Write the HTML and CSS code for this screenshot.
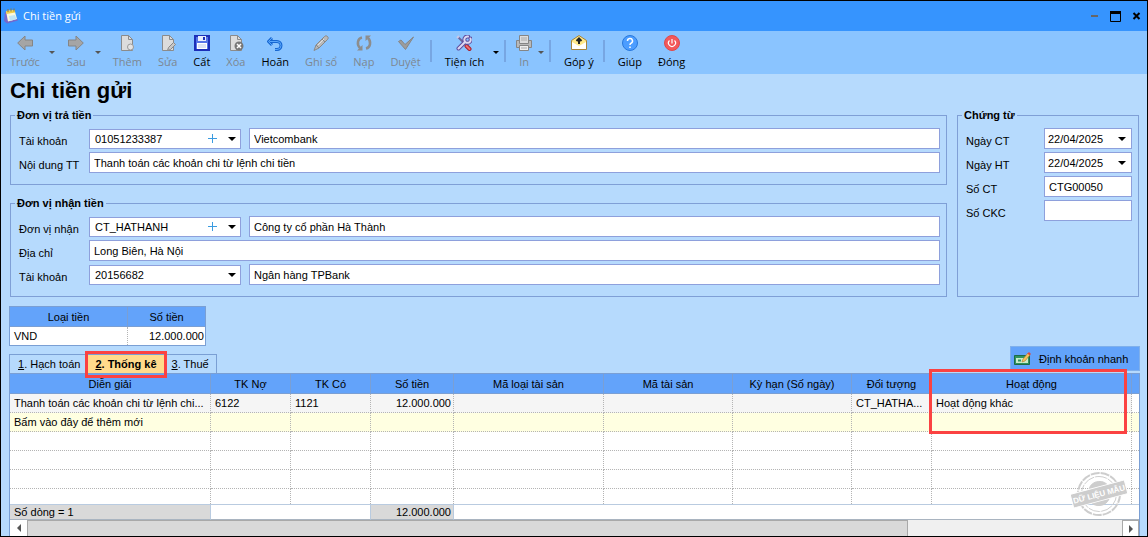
FILE: index.html
```html
<!DOCTYPE html>
<html lang="vi">
  <head>
    <meta charset="utf-8" />
    <meta name="viewport" content="width=device-width, initial-scale=1.0" />
    <title>Chi tiền gửi</title>
    <link rel="stylesheet" href="styles.css">
  </head>
  <body>
    <div class="window">
      <header class="titlebar">
        <svg width="16" height="16" viewBox="0 0 16 16">
          <path d="M2 4L1 13l3 2.500 11-3-2-3z" fill="#7468cc" />
          <path d="M3 3l8.500-1 2.500 9-9 2.500z" fill="#fdf9dc" />
          <path d="M6 8l6-1 1.500 4-6.500 2z" fill="#bfe4f7" />
          <path d="M3 3l8.500-1 .8 2.500L3.300 6z" fill="#f0cf50" />
          <path d="M5 1v3M8 .5v3M11 .5v3" stroke="#8a7a3a" />
        </svg>
        <span class="titlebar-text">Chi tiền gửi</span>
        <button class="win-btn" aria-label="Minimize">
          <svg width="11" height="11" viewBox="0 0 11 11"><path d="M2 4h7v2H2z" fill="#666" /></svg>
        </button>
        <button class="win-btn" aria-label="Maximize">
          <svg width="11" height="11" viewBox="0 0 11 11"><path d="M.5 1h10v9.500H.5z" fill="none" stroke="#000" /><path d="M0 0h11v3H0z" /></svg>
        </button>
        <button class="win-btn" aria-label="Close">
          <svg width="11" height="11" viewBox="0 0 11 11"><path d="M2.500 2l6 6M8.500 2l-6 6" stroke="#000" stroke-width="2" /></svg>
        </button>
      </header>

      <nav class="toolbar">
        <button class="tool" disabled>
          <svg width="16" height="16" viewBox="0 0 16 16"><path d="M.700 8L8 1v4h7.500v6H8v4z" fill="#a5a5a5" stroke="#858585" /></svg>
          Trước
        </button>
        <button class="drop" disabled aria-label="Trước"></button>
        <button class="tool" disabled>
          <svg width="16" height="16" viewBox="0 0 16 16"><path d="M15.300 8L8 1v4H.500v6H8v4z" fill="#a5a5a5" stroke="#858585" /></svg>
          Sau
        </button>
        <button class="drop" disabled aria-label="Sau"></button>
        <button class="tool" disabled>
          <svg width="16" height="16" viewBox="0 0 16 16"><path d="M2.500.500h7l4 4v11h-11z" fill="#dcdcdc" stroke="#8b8b8b" /><path d="M9.500.500v4h4" fill="none" stroke="#8b8b8b" /><circle cx="11.500" cy="12" r="3" fill="#e4e4e4" stroke="#999" /></svg>
          Thêm
        </button>
        <button class="tool" disabled>
          <svg width="16" height="16" viewBox="0 0 16 16"><path d="M2.500.500h7l4 4v11h-11z" fill="#dcdcdc" stroke="#8b8b8b" /><path d="M9.500.500v4h4" fill="none" stroke="#8b8b8b" /><path d="M7.500 15.500l1-3 5-5 2 2-5 5z" fill="#c8c8c8" stroke="#888" /></svg>
          Sửa
        </button>
        <button class="tool">
          <svg width="16" height="16" viewBox="0 0 16 16"><path d="M1 1h14v14H1z" fill="#5573e6" stroke="#1c2fb8" stroke-width="2" /><path d="M4 1h8v5H4z" fill="#e8eefc" /><path d="M9 2h2v3H9z" fill="#1c2fb8" /><path d="M3 8h10v6H3z" fill="#fff" /><path d="M4 10h8M4 12h8" stroke="#b9c6ea" /></svg>
          Cất
        </button>
        <button class="tool" disabled>
          <svg width="16" height="16" viewBox="0 0 16 16"><path d="M2.500.500h7l4 4v11h-11z" fill="#dcdcdc" stroke="#8b8b8b" /><path d="M9.500.500v4h4" fill="none" stroke="#8b8b8b" /><circle cx="11" cy="11" r="4.500" fill="#777" /><path d="M9 9l4 4M13 9l-4 4" stroke="#fff" stroke-width="1.500" /></svg>
          Xóa
        </button>
        <button class="tool">
          <svg width="16" height="16" viewBox="0 0 16 16"><path d="M5 3L1.500 6.500 5 10M2 6.500h8a4 4 0 0 1 0 8H8" fill="none" stroke="#1767d2" stroke-width="3" /><path d="M5 3L1.500 6.500 5 10M2.500 6.500H10a4 4 0 0 1 0 8H8" fill="none" stroke="#5aa7fb" /></svg>
          Hoãn
        </button>
        <button class="tool" disabled>
          <svg width="16" height="16" viewBox="0 0 16 16"><path d="M1 15.500l2-5.500L11.500 1.500c2-2 5 1 3 3L6 13z" fill="#b9b9b9" stroke="#888" /><path d="M3 10l3 3M9 4l3 3" stroke="#888" /><path d="M5 10l6-6" stroke="#e2e2e2" /></svg>
          Ghi sổ
        </button>
        <button class="tool" disabled>
          <svg width="16" height="16" viewBox="0 0 16 16"><path d="M6 2.500C1.500 3.500.500 9.500 4 13M10 13.500c4.500-1 5.500-7 2-10.500" fill="none" stroke="#8d8d8d" stroke-width="2.500" /><path d="M6.500 10v5.500H1zM9.500 6V.500H15z" fill="#8d8d8d" /></svg>
          Nạp
        </button>
        <button class="tool" disabled>
          <svg width="16" height="16" viewBox="0 0 16 16"><path d="M.500 6.500L3 5l4 4.500L15.500 2 7.500 14.500z" fill="#9c9c9c" stroke="#858585" /></svg>
          Duyệt
        </button>
        <span class="separator"></span>
        <button class="tool">
          <svg width="16" height="16" viewBox="0 0 16 16"><path d="M2 2l6 6" stroke="#6d649c" stroke-width="2" /><path d="M1 3l2-2" stroke="#c9c6e6" stroke-width="2" /><path d="M10.500 11l3 3" stroke="#a81f2e" stroke-width="4" stroke-linecap="round" /><path d="M10.500 11l3 3" stroke="#f06f6f" stroke-width="2" stroke-linecap="round" /><path d="M2.500 13.500L9 7M14.500 3.500A3.200 3.200 0 1 1 12 1.500" fill="none" stroke="#5d4b9e" stroke-width="4" stroke-linecap="round" /><path d="M2.500 13.500L9 7M14.500 3.500A3.200 3.200 0 1 1 12 1.500" fill="none" stroke="#dcd9f3" stroke-width="2" stroke-linecap="round" /></svg>
          Tiện ích
        </button>
        <button class="drop" aria-label="Tiện ích"></button>
        <span class="separator"></span>
        <button class="tool" disabled>
          <svg width="16" height="16" viewBox="0 0 16 16"><path d="M.500 5.500h15v7H.500z" fill="#b9b9b9" stroke="#858585" /><path d="M3.500.500h9v8h-9z" fill="#ddd" stroke="#858585" /><path d="M3.500 10.500h9v5h-9z" fill="#eee" stroke="#858585" /><path d="M5 3h6M5 5h6M5 13h6" stroke="#aaa" /></svg>
          In
        </button>
        <button class="drop" disabled aria-label="In"></button>
        <span class="separator"></span>
        <button class="tool">
          <svg width="16" height="16" viewBox="0 0 16 16"><path d="M.500 5.500L8 .500l7.500 5v9H.500z" fill="#ffe98a" stroke="#a8853a" /><path d="M1 7l7 4 7-4v7H1z" fill="#fff" /><path d="M8 9V4M5.500 6L8 3.500 10.500 6" fill="none" stroke="#222" stroke-width="2" /></svg>
          Góp ý
        </button>
        <span class="separator"></span>
        <button class="tool">
          <svg width="16" height="16" viewBox="0 0 16 16"><circle cx="8" cy="8" r="7.500" fill="#4c9dff" stroke="#2878dd" /><path d="M5.500 6a2.500 2.500 0 1 1 3.500 2.200Q8 8.800 8 10M8 11.500V13" fill="none" stroke="#fff" stroke-width="1.500" /></svg>
          Giúp
        </button>
        <button class="tool">
          <svg width="16" height="16" viewBox="0 0 16 16"><circle cx="8" cy="8" r="7.500" fill="#f2585b" stroke="#e04848" /><path d="M5.500 5.500a3.500 3.500 0 1 0 5 0M8 4v4.500" fill="none" stroke="#fff" stroke-width="1.200" /></svg>
          Đóng
        </button>
      </nav>

      <main class="content">
        <h1>Chi tiền gửi</h1>

        <div class="forms">
          <div class="forms-left">
            <fieldset class="group">
              <legend>Đơn vị trả tiền</legend>
              <div class="row">
                <label for="pay-account">Tài khoản</label>
                <div class="combo">
                  <select id="pay-account"><option>01051233387</option></select>
                  <button class="add" aria-label="Thêm tài khoản"></button>
                </div>
                <input type="text" value="Vietcombank" aria-label="Ngân hàng trả" />
              </div>
              <div class="row">
                <label for="pay-content">Nội dung TT</label>
                <input type="text" id="pay-content" value="Thanh toán các khoản chi từ lệnh chi tiền" />
              </div>
            </fieldset>

            <fieldset class="group">
              <legend>Đơn vị nhận tiền</legend>
              <div class="row">
                <label for="receiver">Đơn vị nhận</label>
                <div class="combo">
                  <select id="receiver"><option>CT_HATHANH</option></select>
                  <button class="add" aria-label="Thêm đơn vị"></button>
                </div>
                <input type="text" value="Công ty cổ phần Hà Thành" aria-label="Tên đơn vị nhận" />
              </div>
              <div class="row">
                <label for="address">Địa chỉ</label>
                <input type="text" id="address" value="Long Biên, Hà Nội" />
              </div>
              <div class="row">
                <label for="receive-account">Tài khoản</label>
                <div class="combo">
                  <select id="receive-account"><option>20156682</option></select>
                </div>
                <input type="text" value="Ngân hàng TPBank" aria-label="Ngân hàng nhận" />
              </div>
            </fieldset>
          </div>

          <fieldset class="group voucher">
            <legend>Chứng từ</legend>
            <div class="row">
              <label for="date-ct">Ngày CT</label>
              <div class="date">
                <input type="text" id="date-ct" value="22/04/2025" />
                <button class="caret" aria-label="Chọn ngày CT"></button>
              </div>
            </div>
            <div class="row">
              <label for="date-ht">Ngày HT</label>
              <div class="date">
                <input type="text" id="date-ht" value="22/04/2025" />
                <button class="caret" aria-label="Chọn ngày HT"></button>
              </div>
            </div>
            <div class="row">
              <label for="no-ct">Số CT</label>
              <input type="text" id="no-ct" value="CTG00050" />
            </div>
            <div class="row">
              <label for="no-ckc">Số CKC</label>
              <input type="text" id="no-ckc" value="" />
            </div>
          </fieldset>
        </div>

        <table class="currency">
          <thead>
            <tr><th>Loại tiền</th><th>Số tiền</th></tr>
          </thead>
          <tbody>
            <tr><td>VND</td><td class="num">12.000.000</td></tr>
          </tbody>
        </table>

        <div class="tabs">
          <button class="tab"><u>1</u>. Hạch toán</button>
          <button class="tab active"><u>2</u>. Thống kê</button>
          <button class="tab"><u>3</u>. Thuế</button>
          <button class="quick">
            <svg width="17" height="14" viewBox="0 0 17 14"><path d="M.500 3.500h15v9H.500z" fill="#2f9460" stroke="#1d6b45" /><path d="M2 6h12v5H2z" fill="#c9ecc9" /><path d="M4 8.500h3" stroke="#2f9460" stroke-width="2" /><path d="M8 10l1-3 5-6 2 2-5 6z" fill="#f5c35c" stroke="#a8762d" stroke-width=".600" /><path d="M13.500 1.500L15 0l2 2-1.500 1.500z" fill="#e0483e" /></svg>
            Định khoản nhanh
          </button>
        </div>

        <div class="grid">
          <table class="detail">
            <colgroup>
              <col class="w-desc" />
              <col class="w-80" />
              <col class="w-80" />
              <col class="w-amount" />
              <col class="w-type" />
              <col class="w-asset" />
              <col class="w-term" />
              <col class="w-80" />
              <col />
              <col class="w-end" />
            </colgroup>
            <thead>
              <tr>
                <th>Diễn giải</th>
                <th>TK Nợ</th>
                <th>TK Có</th>
                <th>Số tiền</th>
                <th>Mã loại tài sản</th>
                <th>Mã tài sản</th>
                <th>Kỳ hạn (Số ngày)</th>
                <th>Đối tượng</th>
                <th class="marked">Hoạt động</th>
                <th></th>
              </tr>
            </thead>
            <tbody>
              <tr class="current">
                <td>Thanh toán các khoản chi từ lệnh chi...</td>
                <td>6122</td>
                <td>1121</td>
                <td class="num">12.000.000</td>
                <td></td>
                <td></td>
                <td></td>
                <td>CT_HATHA...</td>
                <td>Hoạt động khác</td>
                <td></td>
              </tr>
              <tr class="new-row">
                <td>Bấm vào đây để thêm mới</td>
                <td></td><td></td><td></td><td></td><td></td><td></td><td></td><td></td><td></td>
              </tr>
              <tr><td></td><td></td><td></td><td></td><td></td><td></td><td></td><td></td><td></td><td></td></tr>
              <tr><td></td><td></td><td></td><td></td><td></td><td></td><td></td><td></td><td></td><td></td></tr>
              <tr><td></td><td></td><td></td><td></td><td></td><td></td><td></td><td></td><td></td><td></td></tr>
              <tr class="last"><td></td><td></td><td></td><td></td><td></td><td></td><td></td><td></td><td></td><td></td></tr>
            </tbody>
            <tfoot>
              <tr>
                <td class="sum">Số dòng = 1</td>
                <td colspan="2"></td>
                <td class="sum num">12.000.000</td>
                <td colspan="6"></td>
              </tr>
            </tfoot>
          </table>
          <div class="scrollbar">
            <button class="scroll-btn prev" aria-label="Cuộn trái"></button>
            <div class="thumb"></div>
            <button class="scroll-btn next" aria-label="Cuộn phải"></button>
          </div>
          <svg class="stamp" width="60" height="48" viewBox="0 0 60 48">
            <g fill="none" stroke="#cdcdcd">
              <circle cx="29" cy="24" r="21" stroke-width="2" stroke-dasharray="9 1" />
              <circle cx="29" cy="24" r="17.500" stroke-dasharray="12 1" />
              <path d="M19 19a11 11 0 0 1 20-2zM20 31a11 11 0 0 0 19-2z" fill="#cdcdcd" />
            </g>
            <g transform="rotate(-15 29 24)">
              <rect x="1" y="17" width="56" height="14" fill="#cdcdcd" stroke="#fff" />
              <text x="29" y="27" text-anchor="middle">DỮ LIỆU MẪU</text>
            </g>
          </svg>
        </div>
      </main>
    </div>
  </body>
</html>
```
FILE: styles.css
```css
* {
  box-sizing: border-box;
}
body {
  margin: 0;
  font-family: "Liberation Sans", Arial, sans-serif;
  font-size: 11px;
  line-height: 14px;
  color: #000;
}
button,
input,
select {
  font: inherit;
  color: inherit;
  margin: 0;
  border-radius: 0;
}
button {
  padding: 0;
  border: none;
  background: none;
}
.window {
  display: flex;
  flex-direction: column;
  min-height: 100vh;
  border: 1px solid #000;
  background: #b6dafd;
}
.titlebar {
  display: flex;
  align-items: center;
  height: 30px;
  padding: 0 5px 0 2px;
  background: #3694fe;
}
.titlebar-text {
  flex: 1;
  padding-left: 4px;
  font-family: "Open Sans", "Noto Sans", sans-serif;
  font-size: 11px;
  color: #fff;
}
.win-btn {
  width: 11px;
  height: 11px;
  margin-left: 10px;
}
.win-btn svg {
  display: block;
}

/* toolbar */
.toolbar {
  display: flex;
  height: 43px;
  padding-left: 1px;
  background: #8ac4ff;
}
.tool {
  display: flex;
  flex-direction: column;
  align-items: center;
  gap: 3px;
  padding: 4px 8px 0;
  font-family: "Open Sans", "Noto Sans", sans-serif;
  line-height: 16px;
  white-space: nowrap;
}
.tool svg {
  margin: 0 -4px;
}
.tool:disabled {
  color: #7d8791;
}
.drop {
  display: flex;
  width: 11px;
  padding: 20px 0 0 1px;
  color: #000;
}
.drop:disabled {
  color: #555;
}
.drop::before,
.caret::before,
.combo::after {
  content: "";
  border: 4px solid transparent;
  border-top-color: currentColor;
  border-bottom: 0;
}
.drop::before {
  border-width: 3px 3px 0;
}
.separator {
  width: 2px;
  height: 22px;
  margin: 9px 5px 0 1px;
  background: #77a6e2;
}

/* form */
.content {
  padding: 0 7px 0 8px;
}
h1 {
  margin: 3px 0 3px 1px;
  font-size: 22px;
  line-height: 28px;
}
.forms {
  display: flex;
  gap: 10px;
  padding: 0 1px;
}
.forms-left {
  flex: 1;
  display: flex;
  flex-direction: column;
  gap: 11px;
}
.group {
  min-width: 0;
  margin: 0;
  padding: 6px 6px 11px 8px;
  border: 1px solid #7f9fd6;
}
.group legend {
  margin-left: -4px;
  padding: 0 2px;
  font-weight: bold;
}
.row {
  display: flex;
  align-items: center;
  height: 21px;
}
.row + .row {
  margin-top: 3px;
}
.row label {
  flex: none;
  width: 70px;
  padding-top: 4px;
}
.row input {
  flex: 1;
  min-width: 0;
  height: 21px;
  padding: 0 4px;
  border: 1px solid #8ea0dc;
  background: #fff;
}
.combo {
  position: relative;
  width: 152px;
  margin-right: 8px;
}
.combo select {
  display: block;
  width: 100%;
  height: 20px;
  padding: 0 5px;
  border: 1px solid #8ea0dc;
  background: #fff;
  appearance: none;
}
.combo::after {
  position: absolute;
  top: 8px;
  right: 5px;
  pointer-events: none;
}
.add {
  position: absolute;
  top: 5px;
  right: 24px;
  width: 9px;
  height: 9px;
  background:
    linear-gradient(#3a9be0, #3a9be0) center / 9px 1px no-repeat,
    linear-gradient(#3a9be0, #3a9be0) center / 1px 9px no-repeat;
}
.voucher {
  width: 182px;
}
.voucher label {
  width: 78px;
}
.date {
  display: flex;
  flex: 1;
  min-width: 0;
  border: 1px solid #8ea0dc;
  background: #fff;
}
.row .date input {
  height: 19px;
  padding: 0 3px;
  border: none;
}
.caret {
  display: flex;
  align-items: center;
  width: 13px;
}

/* tables */
table {
  border-collapse: separate;
  border-spacing: 0;
  table-layout: fixed;
  background: #fff;
}
th {
  height: 20px;
  padding: 0;
  font-weight: normal;
  background: #63a3fa;
  border-right: 1px solid #7a9fd4;
  border-bottom: 1px solid #7a9fd4;
}
td {
  height: 19px;
  padding: 0 4px;
  white-space: nowrap;
  border-right: 1px dotted #b4b4b4;
  border-bottom: 1px dotted #b4b4b4;
}
.num {
  padding: 0 2px;
  text-align: right;
}
.currency {
  width: 197px;
  margin-top: 9px;
  border: 1px solid #7a9fd4;
}
.currency th:first-child {
  width: 118px;
}
.currency th:last-child {
  border-right: none;
}
.currency td {
  height: 18px;
  border-bottom: none;
}
.currency .num {
  padding-right: 1px;
  border-right: none;
}
.tabs {
  display: flex;
  align-items: flex-end;
  height: 27px;
}
.tab {
  position: relative;
  height: 19px;
  padding: 0 7px;
  border: 1px solid #7a9fd4;
  border-width: 1px 1px 0 0;
}
.tab:first-child {
  padding: 0 7px 0 8px;
  border-left-width: 1px;
}
.tab.active {
  padding: 0 7px;
  background: #ffdb8c;
  font-weight: bold;
}
.tab.active::after,
.marked::after {
  content: "";
  position: absolute;
  z-index: 1;
  border: 3px solid #fb4242;
}
.tab.active::after {
  inset: -4px -3px -5px;
}
.quick {
  display: flex;
  align-items: center;
  gap: 8px;
  align-self: flex-start;
  width: 130px;
  height: 25px;
  margin-left: auto;
  padding-left: 3px;
  border: 1px solid #7fb0ec;
  background: #63a3fa;
  white-space: nowrap;
}
.grid {
  position: relative;
  border: 1px solid #7a9fd4;
  border-bottom: none;
}
.detail {
  width: 100%;
}
.w-desc {
  width: 201px;
}
.w-80 {
  width: 80px;
}
.w-amount {
  width: 83px;
}
.w-type {
  width: 150px;
}
.w-asset {
  width: 129px;
}
.w-term {
  width: 119px;
}
.w-end {
  width: 7px;
}
.detail tr > :last-child {
  padding: 0;
  border-right: none;
}
.marked {
  position: relative;
}
.marked::after {
  top: -5px;
  left: -3px;
  right: 4px;
  height: 59px;
}
.current {
  background: #f5f5f5;
}
.current td:last-child {
  background: #fff;
}
.new-row {
  background: #ffffe1;
}
.last td {
  height: 15px;
  border-bottom: none;
}
tfoot td {
  height: 16px;
  border-top: 1px solid #b9cbe0;
  border-bottom: 1px solid #a9b4c0;
  border-right: 1px solid #b9cbe0;
}
.sum {
  background: #d9d9d9;
}
.scrollbar {
  display: flex;
  height: 16px;
  background: #f0f0f0;
}
.thumb {
  width: 78%;
  border: 1px solid #a9a9a9;
  border-bottom: none;
  background: #d9d9d9;
}
.scroll-btn {
  display: flex;
  align-items: center;
  justify-content: center;
  width: 17px;
  background: #fff;
}
.scroll-btn::before {
  content: "";
  border: 4px solid transparent;
}
.prev::before {
  border-left: 0;
  border-right-color: #555;
}
.next {
  margin-left: auto;
  border: 1px solid #a9a9a9;
  border-bottom: none;
}
.next::before {
  border-right: 0;
  border-left-color: #555;
}
.stamp {
  position: absolute;
  right: 9px;
  bottom: 18px;
}
.stamp text {
  fill: #fff;
  font-size: 8px;
  font-weight: bold;
}
```
